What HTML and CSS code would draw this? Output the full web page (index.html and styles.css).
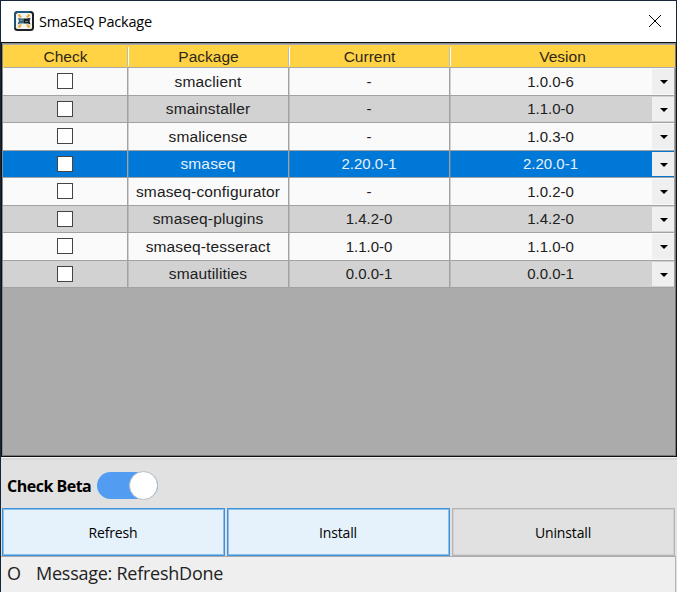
FILE: index.html
```html
<!DOCTYPE html>
<html lang="en">
<head>
<meta charset="utf-8">
<title>SmaSEQ Package</title>
<link rel="stylesheet" href="styles.css">
</head>
<body>
<div class="window">
  <header class="titlebar">
    <svg class="logo" width="20" height="20" viewBox="0 0 20 20">
      <rect x="1" y="1" width="18" height="18" rx="2.500" fill="#f3f4f2" stroke="#1d1f22" stroke-width="2"/>
      <path d="M1 17V3.500Q1 1 3.500 1H16" fill="none" stroke="#20587f" stroke-width="1.800"/>
      <path d="M4.500 3.500l2.500 3M15.500 3.500l-2.500 3M4.500 16.500l2.500-3M15.500 16.500l-2.500-3" stroke="#e8b04c" stroke-width="2.400"/>
      <path d="M4 7L7 7.500H10V12.500H6L3.500 13.500L5 10Z" fill="#34667f"/>
      <path d="M16.500 7L13 7.500H10V12.500H14L16.500 13.500L15.500 10Z" fill="#171d23"/>
      <path d="M6 9.500H9M11 10.500H14" stroke="#8d969a" stroke-width=".8"/>
    </svg>
    <h1 class="title">SmaSEQ Package</h1>
    <svg class="close" width="14" height="14" viewBox="0 0 14 14"><path d="M1 1L13 13M13 1L1 13" stroke="#000" stroke-width="1"/></svg>
  </header>
  <main class="grid">
    <div class="row head"><div><span>Check</span></div><div><span>Package</span></div><div><span>Current</span></div><div><span>Vesion</span></div></div>
    <div class="row"><div><i class="box"></i></div><div class="name">smaclient</div><div>-</div><div class="version"><span>1.0.0-6</span><b class="drop"></b></div></div>
    <div class="row alt"><div><i class="box"></i></div><div class="name">smainstaller</div><div>-</div><div class="version"><span>1.1.0-0</span><b class="drop"></b></div></div>
    <div class="row"><div><i class="box"></i></div><div class="name">smalicense</div><div>-</div><div class="version"><span>1.0.3-0</span><b class="drop"></b></div></div>
    <div class="row selected"><div><i class="box"></i></div><div class="name">smaseq</div><div>2.20.0-1</div><div class="version"><span>2.20.0-1</span><b class="drop"></b></div></div>
    <div class="row"><div><i class="box"></i></div><div class="name">smaseq-configurator</div><div>-</div><div class="version"><span>1.0.2-0</span><b class="drop"></b></div></div>
    <div class="row alt"><div><i class="box"></i></div><div class="name">smaseq-plugins</div><div>1.4.2-0</div><div class="version"><span>1.4.2-0</span><b class="drop"></b></div></div>
    <div class="row"><div><i class="box"></i></div><div class="name">smaseq-tesseract</div><div>1.1.0-0</div><div class="version"><span>1.1.0-0</span><b class="drop"></b></div></div>
    <div class="row alt"><div><i class="box"></i></div><div class="name">smautilities</div><div>0.0.0-1</div><div class="version"><span>0.0.0-1</span><b class="drop"></b></div></div>
  </main>
  <section class="options"><span class="beta">Check Beta</span><span class="toggle"><i class="knob"></i></span></section>
  <div class="actions"><button>Refresh</button><button>Install</button><button class="inactive">Uninstall</button></div>
  <footer class="status"><span class="state">O</span><span class="message">Message: RefreshDone</span></footer>
</div>
</body>
</html>
```
FILE: styles.css
```css
* { box-sizing: border-box; }
body { margin: 0; overflow: hidden; }
.window {
  width: 677px; height: 592px;
  border-left: 1px solid #16263a; border-top: 1px solid #16263a;
  background: #e1e1e1; color: #000;
  font-family: "Open Sans", "Noto Sans", sans-serif;
  display: flex; flex-direction: column;
}
.titlebar { height: 41px; background: #fff; display: flex; align-items: center; padding: 0 14px 1px 13px; border-right: 1px solid #16263a; }
.logo, .close { flex: none; }
.title { margin: 0 auto 0 5px; font-size: 14.5px; font-weight: 400; letter-spacing: -.22px; white-space: nowrap; }
.grid {
  height: 415px; background: #ababab;
  border: 1px solid #111;
  box-shadow: inset 1px 1px #8a8a8a, inset -1px -1px #777;
  padding: 2px 0 0 1px;
  font: 15px "Liberation Sans", Arial, sans-serif; color: #202020;
}
.row { display: grid; grid-template-columns: 125px 161px 161px 225px; height: 27.5px; width: 672px; background: #fafafa; text-align: center; }
.row > div { border-right: 1px solid #a2a2a2; border-bottom: 1px solid #a2a2a2; display: flex; align-items: center; justify-content: center; min-width: 0; white-space: nowrap; }
.row:not(.head) > div:not(:last-child) { box-shadow: 1px 0 rgba(150, 150, 150, .4); }
.row.head { height: 23px; background: #ffd343; color: #302719; font-size: 15.5px; padding-left: 1px; }
.head > div { border-right: 0; border-bottom-color: #aaa; padding: 2px 2px 0 0; }
.head > div:not(:last-child) { background: linear-gradient(90deg, #bbb 50%, #fff 50%) right 2px / 2px 19px no-repeat; }
.alt { background: #d2d2d2; }
.row.selected { background: #0078d7; color: #e5f1fb; }
.row > .name { font-size: 15.5px; letter-spacing: .15px; padding-top: 1px; }
.box { width: 16px; height: 16px; border: 1px solid #444; background: #fff; }
.row > .version { justify-content: flex-start; }
.version > span { flex: 0 0 201px; }
.drop { width: 22px; flex: none; margin: 1px 0 1px 1px; align-self: stretch; background: #efefef; display: flex; align-items: center; justify-content: center; }
.drop::after { content: ""; border: 4px solid transparent; border-top: 4px solid #000; border-bottom: 0; margin: 2px 0 0 1px; }
.options { height: 51px; border-top: 1px solid #f4f4f4; box-shadow: inset 0 2px #d7d7d7; display: flex; align-items: center; padding: 5px 0 0 6px; }
.beta { font-size: 16px; font-weight: 700; letter-spacing: -.5px; width: 90px; white-space: nowrap; }
.toggle { width: 61px; height: 27px; border-radius: 14px; background: #529df2; display: flex; align-items: center; justify-content: flex-end; }
.knob { flex: none; width: 29px; height: 29px; border-radius: 50%; background: #fff; border: 1px solid #b8bdc5; }
.actions { height: 48px; display: grid; grid-template-columns: repeat(3, 223px); gap: 2px; padding-left: 1px; }
button { border: 1px solid #3c92dc; box-shadow: inset 0 0 0 1px #8bc0ec; background: #e5f1fb; color: #000; padding: 0 1px 0 0; font: 14px "Open Sans", sans-serif; letter-spacing: -.15px; }
.inactive { border-color: #b5b5b5; background: #e1e1e1; box-shadow: inset 0 0 0 1px #d0d0d0; }
.status { flex: 1; width: 675px; border-top: 1px solid #ababad; border-right: 1px solid #b5b5b9; background: #efefef; color: #222; font-size: 18px; display: flex; align-items: center; padding: 0 0 3px 6px; white-space: nowrap; }
.state { width: 29px; }
.message { letter-spacing: -.25px; }
```
